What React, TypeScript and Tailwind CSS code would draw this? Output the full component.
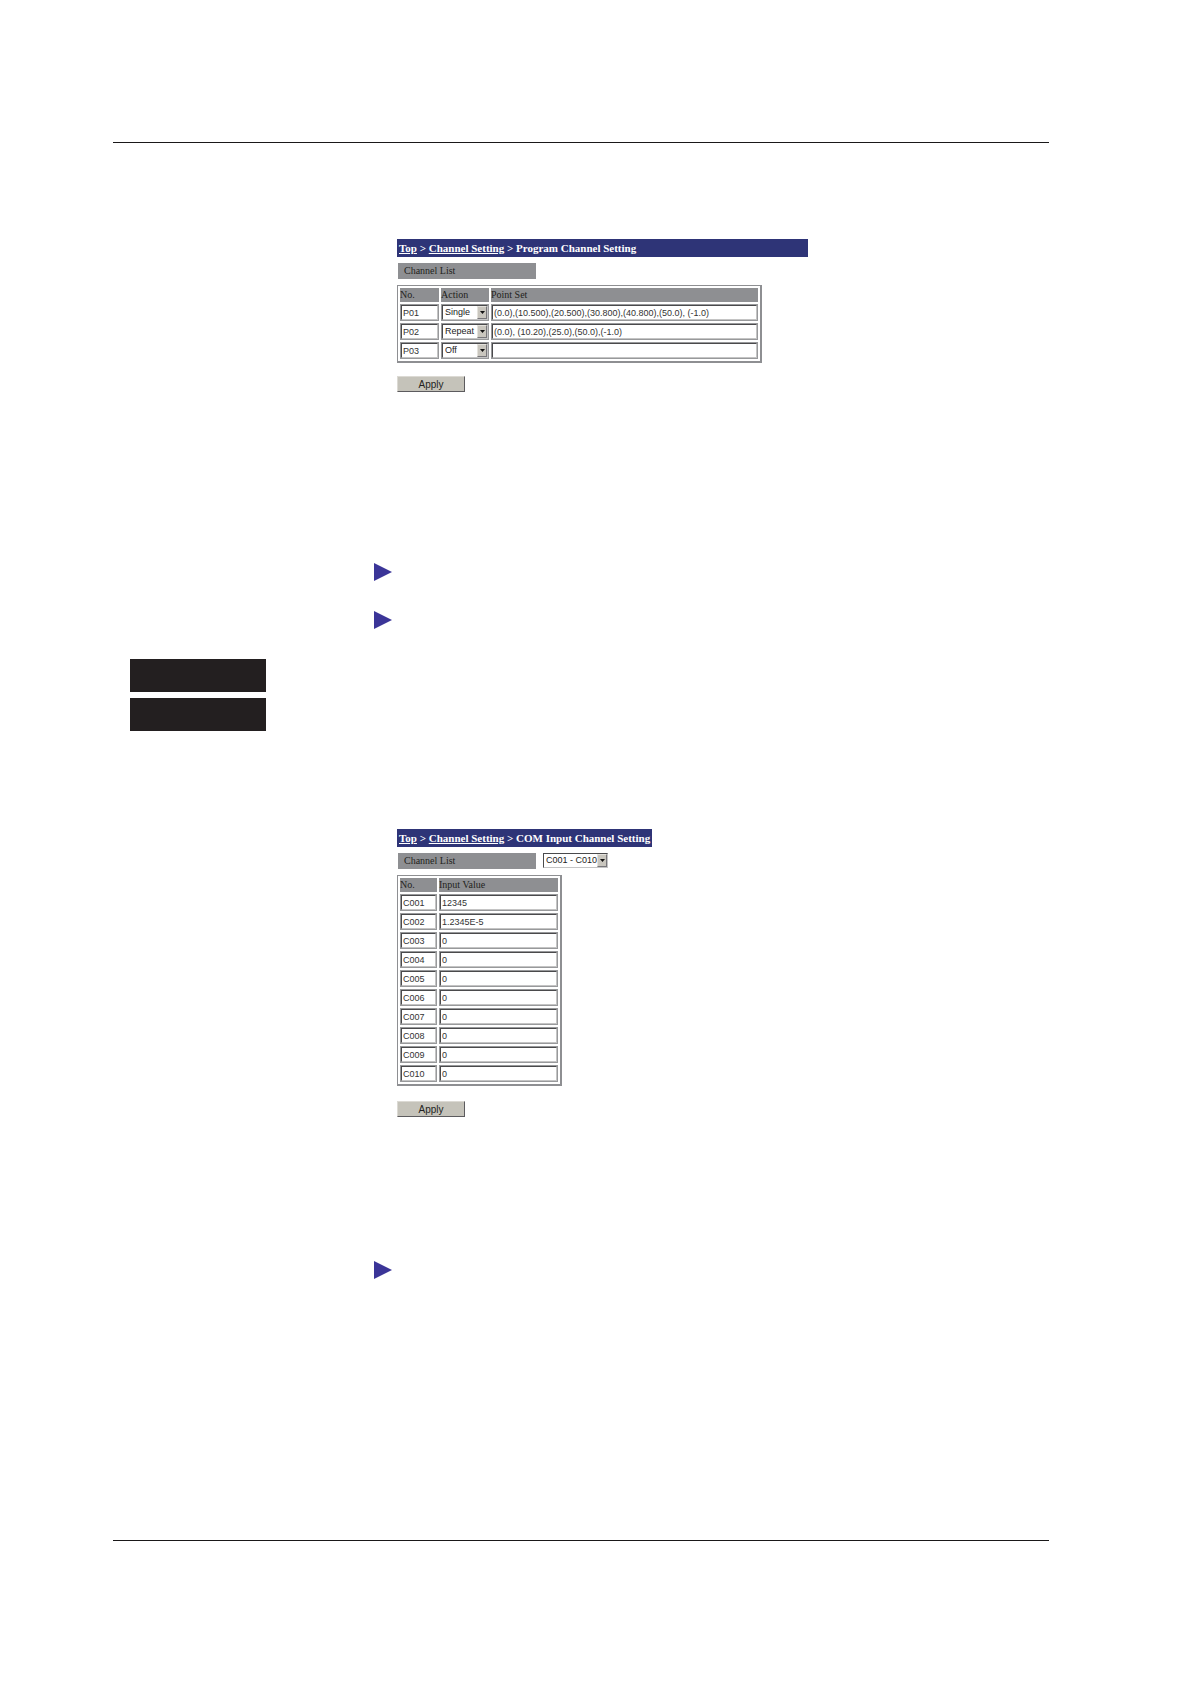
import { useState } from "react";

const programs = [
  { no: "P01", action: "Single", points: "(0.0),(10.500),(20.500),(30.800),(40.800),(50.0), (-1.0)" },
  { no: "P02", action: "Repeat", points: "(0.0), (10.20),(25.0),(50.0),(-1.0)" },
  { no: "P03", action: "Off", points: "" },
];

const comInputs = [
  { no: "C001", value: "12345" },
  { no: "C002", value: "1.2345E-5" },
  { no: "C003", value: "0" },
  { no: "C004", value: "0" },
  { no: "C005", value: "0" },
  { no: "C006", value: "0" },
  { no: "C007", value: "0" },
  { no: "C008", value: "0" },
  { no: "C009", value: "0" },
  { no: "C010", value: "0" },
];

const serif = "font-['Liberation_Serif',serif]";
const sans = "font-['Liberation_Sans',sans-serif]";
const sunken = "border border-t-[#4a4a4c] border-l-[#4a4a4c] border-r-[#c4c4c4] border-b-[#c4c4c4]";
const tableClass =
  "table-fixed border-separate border-spacing-[2px] border-t border-l border-r-2 border-b-2 border-[#8e8f92] bg-white";
const thClass = `${serif} h-[14px] bg-[#8e8f92] p-0 text-left text-[10px] leading-[14px] font-normal text-[#231f20] whitespace-nowrap`;
const tdClass = "h-[17px] border border-[#98999b] p-0";

function Breadcrumb({ current, className }: { current: string; className: string }) {
  return (
    <nav
      className={`${serif} h-[18px] bg-[#2e3477] px-[2px] text-[11px] leading-[18px] font-bold text-white whitespace-nowrap ${className}`}
    >
      <a href="#top" className="underline">Top</a>
      {" > "}
      <a href="#channel" className="underline">Channel Setting</a>
      {" > "}
      {current}
    </nav>
  );
}

function ListLabel() {
  return (
    <h2 className={`${serif} ml-px h-4 w-[138px] bg-[#8e8f92] pl-[6px] text-[10px] leading-4 text-[#231f20]`}>
      Channel List
    </h2>
  );
}

function Field({ label, value, readOnly }: { label: string; value: string; readOnly?: boolean }) {
  return (
    <input
      type="text"
      aria-label={label}
      defaultValue={value}
      readOnly={readOnly}
      className={`${sans} ${sunken} block h-[15px] w-full bg-white pl-px text-[9px] leading-[13px] text-[#333] outline-none`}
    />
  );
}

function Picker({ label, initial, options }: { label: string; initial: string; options: string[] }) {
  const [value, setValue] = useState(initial);

  return (
    <div className="relative">
      <select
        aria-label={label}
        value={value}
        onChange={(e) => setValue(e.target.value)}
        className={`${sans} ${sunken} block h-[15px] w-full appearance-none bg-white pl-[2px] text-[9px] leading-[13px] text-[#222]`}
      >
        {options.map((option) => (
          <option key={option}>{option}</option>
        ))}
      </select>
      <span className="pointer-events-none absolute top-px right-px flex h-[13px] w-[10px] items-center justify-center border border-t-[#e4e2dc] border-r-[#77767a] border-b-[#77767a] border-l-[#e4e2dc] bg-[#c9c6be]">
        <svg className="h-[3px] w-[5px]" viewBox="0 0 5 3">
          <path d="M0 0h5L2.5 3z" fill="#111" />
        </svg>
      </span>
    </div>
  );
}

function ApplyButton() {
  return (
    <button
      type="button"
      className="block h-4 w-[68px] border border-t-[#dcdad4] border-r-[#5c5b5e] border-b-[#5c5b5e] border-l-[#dcdad4] bg-[#c5c3ba] text-[10px] leading-[13px] text-[#231f20]"
    >
      Apply
    </button>
  );
}

function Marker() {
  return (
    <svg className="block h-[18px] w-[18px]" viewBox="0 0 18 18">
      <path d="M0 0L18 9L0 18z" fill="#3b3598" />
    </svg>
  );
}

export default function App() {
  return (
    <main className={`${sans} min-h-screen bg-white pt-[142px] pr-[141px] pb-[143px] pl-[113px]`}>
      <div className="border-y border-[#1a1819] pt-24 pb-[261px]">
        {/* Program channels */}
        <section className="pl-[284px]">
          <Breadcrumb current="Program Channel Setting" className="w-[411px]" />
          <div className="mt-[6px]">
            <ListLabel />
          </div>
          <table className={`${tableClass} mt-[6px] mb-[13px] w-[365px]`}>
            <thead>
              <tr>
                <th className={`${thClass} w-[39px]`}>No.</th>
                <th className={`${thClass} w-[48px]`}>Action</th>
                <th className={thClass}>Point Set</th>
              </tr>
            </thead>
            <tbody>
              {programs.map((row) => (
                <tr key={row.no}>
                  <td className={tdClass}>
                    <Field label={`${row.no} number`} value={row.no} readOnly />
                  </td>
                  <td className={tdClass}>
                    <Picker label={`${row.no} action`} initial={row.action} options={["Off", "Single", "Repeat"]} />
                  </td>
                  <td className={tdClass}>
                    <Field label={`${row.no} point set`} value={row.points} />
                  </td>
                </tr>
              ))}
            </tbody>
          </table>
          <ApplyButton />
        </section>

        <div className="mt-[171px] flex flex-col gap-[30px] pl-[261px]">
          <Marker />
          <Marker />
        </div>

        {/* Margin tabs */}
        <div className="mt-[30px] flex flex-col gap-[6px] pl-[17px]">
          <div className="h-[33px] w-[136px] bg-[#231f20]" />
          <div className="h-[33px] w-[136px] bg-[#231f20]" />
        </div>

        {/* COM input channels */}
        <section className="mt-[98px] pl-[284px]">
          <Breadcrumb current="COM Input Channel Setting" className="w-fit" />
          <div className="mt-[6px] flex gap-[7px]">
            <ListLabel />
            <div className="w-[65px]">
              <Picker label="Channel range" initial="C001 - C010" options={["C001 - C010", "C011 - C020"]} />
            </div>
          </div>
          <table className={`${tableClass} mt-[6px] mb-[15px] w-[165px]`}>
            <thead>
              <tr>
                <th className={`${thClass} w-[37px]`}>No.</th>
                <th className={thClass}>Input Value</th>
              </tr>
            </thead>
            <tbody>
              {comInputs.map((row) => (
                <tr key={row.no}>
                  <td className={tdClass}>
                    <Field label={`${row.no} number`} value={row.no} readOnly />
                  </td>
                  <td className={tdClass}>
                    <Field label={`${row.no} input value`} value={row.value} />
                  </td>
                </tr>
              ))}
            </tbody>
          </table>
          <ApplyButton />
        </section>

        <div className="mt-36 pl-[261px]">
          <Marker />
        </div>
      </div>
    </main>
  );
}
